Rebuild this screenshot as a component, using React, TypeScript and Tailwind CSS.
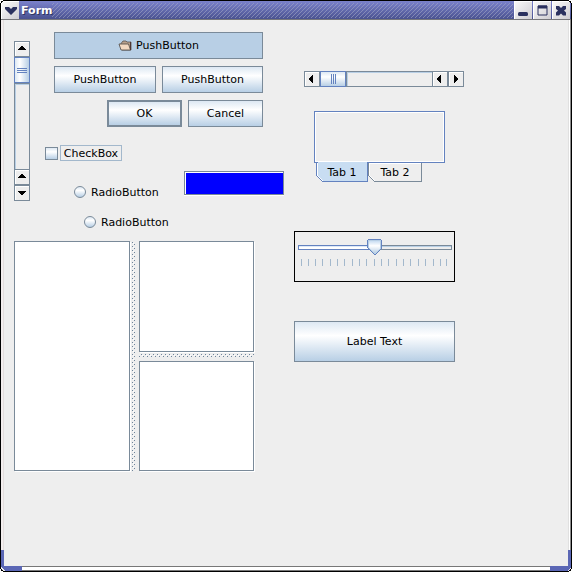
import type { ReactNode } from "react";

type Direction = "up" | "down" | "left" | "right";

const arrowRows: Record<Direction, string> = {
  up: "M7 5h2v1h1v1h1v1h1v1h-8v-1h1v-1h1v-1h1z",
  down: "M4 6h8v1h-1v1h-1v1h-1v1h-2v-1h-1v-1h-1v-1h-1z",
  left: "M8 4h1v8h-1v-1h-1v-1h-1v-1h-1v-2h1v-1h1v-1h1z",
  right: "M6 4h1v1h1v1h1v1h1v2h-1v1h-1v1h-1v1h-1z",
};

function ArrowButton({ dir }: { dir: Direction }) {
  return (
    <button className="block size-4 shrink-0">
      <svg width="16" height="16" shapeRendering="crispEdges" className="block">
        <rect width="16" height="16" fill="#7a8a99" />
        <rect x="1" y="1" width="14" height="14" fill="#fff" />
        <rect x="2" y="2" width="13" height="13" fill="#eee" />
        <path d={arrowRows[dir]} fill="#000" />
      </svg>
    </button>
  );
}

function PushButton({ className, children }: { className: string; children: ReactNode }) {
  return (
    <button
      className={`flex items-center justify-center border-[#7a8a99] leading-none ${className}`}
    >
      {children}
    </button>
  );
}

const metal = "bg-linear-to-b from-[#dde8f3] via-white via-35% to-[#b8cfe5]";

function FolderIcon() {
  return (
    <svg width="14" height="11" viewBox="0 0 14 11" className="mr-[4px]">
      <path d="M3 3.5 5 1h3l1 1h4v8H4z" fill="#b9a18c" stroke="#55504e" strokeWidth=".8" />
      <path d="M1 4h9.500l2 6H3z" fill="#f3d9c1" stroke="#4c4642" strokeWidth=".8" />
      <path d="M12.500 2v8" stroke="#4e3430" />
    </svg>
  );
}

function TitleButton({ children }: { children: ReactNode }) {
  return (
    <button className="h-[18px] w-[18px] shrink-0 border-t border-l border-white bg-linear-to-br from-[#f8f8f8] to-[#cfcdd2]">
      <svg width="17" height="17" viewBox="0 0 17 17" className="block">
        {children}
      </svg>
    </button>
  );
}

function TitleBar() {
  return (
    <header className="flex h-5 shrink-0 border-t border-b border-t-black border-b-[#77777b] bg-linear-to-b from-[#7b82cc] to-[#4a5290]">
      <TitleButton>
        <path d="M3 5h4l2 2 2-2h4v2l-6 6-6-6z" fill="#2b315f" />
      </TitleButton>
      <div className="w-[33px] pl-[2px] text-[11px] leading-[20px] font-bold text-white [text-shadow:1px_1px_0_#30355f]">
        Form
      </div>
      <svg className="h-[18px] w-[462px] shrink-0">
        <defs>
          <pattern id="hatch" width="4" height="4" patternUnits="userSpaceOnUse">
            <path d="M0 3h1v1H0zM1 2h1v1H1zM2 1h1v1H2zM3 0h1v1H3z" fill="#a7aac6" opacity=".55" />
          </pattern>
        </defs>
        <rect y="2" width="461" height="15" fill="url(#hatch)" />
      </svg>
      <div className="flex gap-px">
        <TitleButton>
          <rect x="3" y="10" width="10" height="4" rx="1.500" fill="#2b315f" />
        </TitleButton>
        <TitleButton>
          <path d="M4 4h9v9H4z" fill="none" stroke="#2b315f" />
          <path d="M4 3.500h9v3H4z" fill="#2b315f" />
        </TitleButton>
        <TitleButton>
          <path d="M3 4h3l2 2 2-2h3v3l-2 1.500 2 2v3h-3l-2-2-2 2H3v-3l2-2L3 7z" fill="#2b315f" />
        </TitleButton>
      </div>
    </header>
  );
}

function VerticalScrollBar() {
  return (
    <div className="mt-[21px] flex h-40 w-4 flex-col">
      <ArrowButton dir="up" />
      <div className="flex h-[26px] flex-col items-center justify-center gap-px border border-[#6382bf] bg-linear-to-r from-[#dde8f3] via-white via-35% to-[#b8cfe5]">
        <i className="h-px w-[10px] bg-[#6382bf]" />
        <i className="h-px w-[10px] bg-[#6382bf]" />
        <i className="h-px w-[10px] bg-[#6382bf]" />
      </div>
      <div className="flex-1 border-x border-t border-[#7a8a99] shadow-[inset_1px_1px_0_#b8cfe5]" />
      <ArrowButton dir="up" />
      <ArrowButton dir="down" />
    </div>
  );
}

function HorizontalScrollBar() {
  return (
    <div className="ml-[10px] flex h-4 w-40">
      <ArrowButton dir="left" />
      <div className={`flex w-[26px] items-center justify-center gap-px border border-[#6382bf] ${metal}`}>
        <i className="h-[10px] w-px bg-[#6382bf]" />
        <i className="h-[10px] w-px bg-[#6382bf]" />
        <i className="h-[10px] w-px bg-[#6382bf]" />
      </div>
      <div className="flex-1 border-y border-l border-[#7a8a99] shadow-[inset_1px_1px_0_#b8cfe5]" />
      <ArrowButton dir="left" />
      <ArrowButton dir="right" />
    </div>
  );
}

function RadioButton({ className }: { className: string }) {
  return (
    <label className={`flex h-3 items-center gap-[5px] leading-none ${className}`}>
      <span className={`size-3 rounded-full border border-[#7a8a99] ${metal}`} />
      <span>RadioButton</span>
    </label>
  );
}

function TabbedPane() {
  return (
    <div className="mt-6 ml-5 w-[131px]">
      <div className="h-[52px] border border-[#6382bf] shadow-[inset_1px_1px_0_#fff,inset_-1px_-1px_0_#fff]" />
      <div className="relative -mt-px ml-[2px] flex">
        <div className="relative flex h-5 w-[52px] items-center justify-center leading-none">
          <svg width="52" height="20" className="absolute inset-0" shapeRendering="crispEdges">
            <path d="M0 1v13l6 6h46V1z" fill="#6382bf" />
            <path d="M1 1v13l5 5h45V0H2v1z" fill="#fff" />
            <path d="M2 0v13l5 6h44V0z" fill="#c8ddf2" />
          </svg>
          <span className="relative">Tab 1</span>
        </div>
        <div className="relative flex h-5 w-[54px] items-center justify-center leading-none">
          <svg width="54" height="20" className="absolute inset-0" shapeRendering="crispEdges">
            <path d="M0 1v13l6 6h48V1z" fill="#7a8a99" />
            <path d="M1 1v13l5 5h47V1z" fill="#fff" />
            <path d="M2 2v12l5 5h46V2z" fill="#eee" />
            <path d="M0 0h54v1H0z" fill="#6382bf" />
          </svg>
          <span className="relative">Tab 2</span>
        </div>
      </div>
    </div>
  );
}

const ticks = [
  301, 308, 315, 322, 330, 337, 344, 352, 359, 366, 374, 381, 388, 396, 403, 410, 418, 425, 433,
  440, 446,
];

function Slider() {
  return (
    <div className="mt-[49px] h-[51px] w-[161px] border border-black">
      <svg width="159" height="49" className="block" shapeRendering="crispEdges">
        <defs>
          <linearGradient id="knob" x2="0" y2="1">
            <stop stopColor="#c8ddf2" />
            <stop offset=".4" stopColor="#fff" />
            <stop offset="1" stopColor="#b8cfe5" />
          </linearGradient>
        </defs>
        <path d="M3 13h77v5H3z" fill="#6382bf" />
        <path d="M80 13h77v5H80z" fill="#7a8a99" />
        <path d="M4 14h76v3H4z" fill="#fff" />
        <path d="M4 14h76v1H4z" fill="#dce8f8" />
        <path d="M80 14h76v3H80z" fill="#eee" />
        <path d="M80 14h76v1H80z" fill="#b8cfe5" />
        <path d="M73 7h13v1h1v8l-7 7h-1l-7-7V8h1z" fill="#6382bf" />
        <path d="M73 8h13v8l-6 6h-1l-6-6z" fill="#b8cfe5" />
        <path d="M74 9h11v7l-5 5h-1l-5-5z" fill="url(#knob)" />
        {ticks.map((x) => (
          <rect key={x} x={x - 295} y="27" width="1" height="7" fill="#a3b8cc" />
        ))}
      </svg>
    </div>
  );
}

function Pane({ className }: { className: string }) {
  return (
    <div className={`border border-[#7a8a99] bg-white shadow-[1px_1px_0_#fff] ${className}`} />
  );
}

function SplitPane() {
  return (
    <div className="flex h-[230px] w-60">
      <Pane className="w-[116px]" />
      <svg width="9" height="230" shapeRendering="crispEdges">
        <defs>
          <pattern id="bumpsV" width="4" height="4" patternUnits="userSpaceOnUse">
            <path d="M1 0h1v1H1zM3 2h1v1H3z" fill="#fff" />
            <path d="M2 1h1v1H2zM0 3h1v1H0z" fill="#6f859b" />
          </pattern>
        </defs>
        <rect x="2" width="3" height="230" fill="url(#bumpsV)" />
      </svg>
      <div className="flex w-[115px] flex-col">
        <Pane className="h-[111px]" />
        <svg width="115" height="9" shapeRendering="crispEdges">
          <defs>
            <pattern id="bumpsH" width="4" height="4" patternUnits="userSpaceOnUse">
              <path d="M1 1h1v1H1zM3 3h1v1H3z" fill="#fff" />
              <path d="M2 2h1v1H2zM0 0h1v1H0z" fill="#6f859b" />
            </pattern>
          </defs>
          <rect y="2" width="115" height="3" fill="url(#bumpsH)" />
        </svg>
        <Pane className="h-[110px]" />
      </div>
    </div>
  );
}

function WindowFrame() {
  return (
    <svg
      width="572"
      height="572"
      className="pointer-events-none absolute inset-0"
      shapeRendering="crispEdges"
    >
      <path d="M1 20h2v530H1z" fill="#f3eeee" />
      <path d="M3 20h1v530H3z" fill="#e2dddd" />
      <path d="M568 20h1v546h-1z" fill="#e0e0e0" />
      <path d="M569 20h1v530h-1z" fill="#fff" />
      <path d="M570 20h1v530h-1z" fill="#8b8b8b" />
      <path d="M22 566h528v1H22z" fill="#777" />
      <path d="M22 567h528v3H22z" fill="#fff" />
      <path d="M22 570h528v1H22z" fill="#777" />
      <path d="M1 550h3v16h18v5H5l-4-4z" fill="#5b67b5" />
      <path d="M571 550h-3v16h-18v5h17l4-4z" fill="#5b67b5" />
      <path d="M0 0h1v572H0zM571 0h1v572h-1zM0 571h572v1H0zM0 0h572v1H0z" fill="#000" />
      <path d="M0 0h5v1H3v1H2v1H1v2H0zM572 0h-5v1h2v1h1v1h1v2h1z" fill="#000" />
      <path d="M0 572v-5h1v2h1v1h1v1h2v1zM572 572v-5h-1v2h-1v1h-1v1h-2v1z" fill="#000" />
      <path d="M0 0h3v1H1v2H0zM572 0h-3v1h2v2h1zM0 572v-3h1v2h2v1zM572 572v-3h-1v2h-2v1z" fill="#fff" />
    </svg>
  );
}

export default function App() {
  return (
    <main className="relative flex h-[572px] w-[572px] flex-col overflow-hidden bg-[#eee] px-px font-['DejaVu_Sans',sans-serif] text-[11px] text-black">
      <TitleBar />
      <div className="flex pl-[13px]">
        <section className="w-[280px]">
          <div className="flex h-[221px]">
            <VerticalScrollBar />
            <div className="w-[254px] pt-3 pl-[15px]">
              <div className="ml-[9px] flex w-[209px] flex-wrap justify-end gap-x-[6px] gap-y-[7px]">
                <PushButton className="h-[27px] w-[209px] border bg-[#b8cfe5]">
                  <FolderIcon />
                  PushButton
                </PushButton>
                <PushButton className={`h-[27px] w-[102px] border ${metal}`}>PushButton</PushButton>
                <PushButton className={`h-[27px] w-[101px] border ${metal}`}>PushButton</PushButton>
                <PushButton className={`h-[27px] w-[75px] border-2 ${metal}`}>OK</PushButton>
                <PushButton className={`h-[27px] w-[75px] border ${metal}`}>Cancel</PushButton>
              </div>
              <label className="mt-[18px] flex h-4 items-center gap-[2px]">
                <span className={`size-[13px] border border-[#7a8a99] ${metal}`} />
                <span className="flex h-4 w-[62px] items-center justify-center border border-[#a3b8cc] leading-none">
                  CheckBox
                </span>
              </label>
              <div className="mt-[10px] flex justify-between">
                <div>
                  <RadioButton className="mt-[15px] ml-[29px]" />
                  <RadioButton className="mt-[18px] ml-[39px]" />
                </div>
                <div className="h-6 w-[100px] border border-[#7a8a99] bg-[#00f] shadow-[inset_1px_1px_0_#fff,0_1px_0_#fff]" />
              </div>
            </div>
          </div>
          <SplitPane />
        </section>
        <section className="w-[170px] pt-[51px]">
          <HorizontalScrollBar />
          <TabbedPane />
          <Slider />
          <PushButton className={`mt-[39px] h-[41px] w-[161px] border ${metal}`}>
            Label Text
          </PushButton>
        </section>
      </div>
      <WindowFrame />
    </main>
  );
}
